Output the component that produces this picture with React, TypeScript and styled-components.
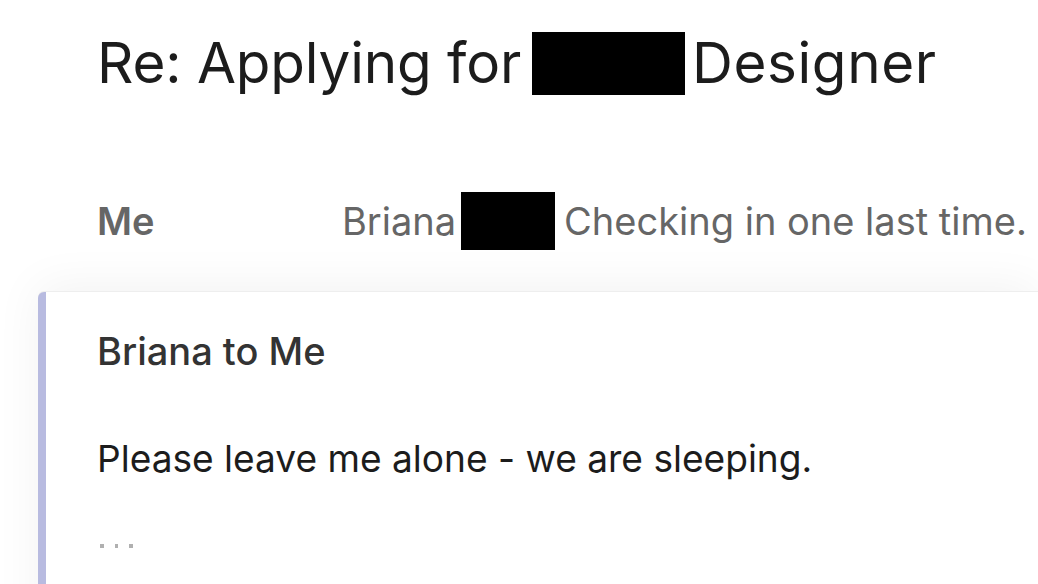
import React from "react";
import styled, { createGlobalStyle } from "styled-components";

const GlobalStyle = createGlobalStyle`
  html, body {
    margin: 0;
    padding: 0;
    background: #ffffff;
  }
  body {
    font-family: Inter, "Liberation Sans", sans-serif;
    overflow: hidden;
  }
`;

const Page = styled.div`
  width: 1038px;
  height: 584px;
  overflow: hidden;
  background: #ffffff;
`;

const Subject = styled.h1`
  margin: 0;
  padding: 25px 0 0 97px;
  height: 150px;
  box-sizing: border-box;
  font-size: 56.6px;
  font-weight: 400;
  line-height: 76px;
  color: #1c1c1c;
  letter-spacing: -0.2px;
  white-space: nowrap;
  display: flex;
  align-items: flex-start;
`;

const Word = styled.span<{ $spacing?: number }>`
  letter-spacing: ${(p) => p.$spacing ?? 0}px;
`;

const Redacted = styled.span<{ $w: number; $h: number; $top?: number }>`
  display: inline-block;
  width: ${(p) => p.$w}px;
  height: ${(p) => p.$h}px;
  margin-top: ${(p) => p.$top ?? 0}px;
  background: #000;
`;

const Gap = styled.span<{ $w: number }>`
  display: inline-block;
  width: ${(p) => p.$w}px;
`;

const ThreadRow = styled.div`
  display: flex;
  align-items: center;
  height: 142px;
  padding-left: 97px;
  font-size: 38px;
  color: #666;
  white-space: nowrap;
`;

const From = styled.div`
  width: 245px;
  font-weight: 600;
  flex-shrink: 0;
`;

const Preview = styled.div`
  display: flex;
  align-items: center;
  font-weight: 400;
`;

const Message = styled.div`
  margin-left: 38px;
  border-left: 8px solid #b8bbe0;
  border-top-left-radius: 6px;
  background: #ffffff;
  box-shadow: 0 -1px 0 #eeeeee, 0 -6px 48px rgba(0, 0, 0, 0.055);
  padding: 36px 0 40px 51px;
  min-height: 400px;
`;

const MessageHead = styled.div`
  font-size: 38px;
  font-weight: 500;
  color: #333;
  margin-bottom: 62px;
`;

const Body = styled.div`
  font-size: 37.1px;
  color: #1c1c1c;
`;

const Ellipsis = styled.div`
  display: flex;
  gap: 11px;
  margin: 63px 0 0 3px;
`;

const Dot = styled.span`
  width: 3.5px;
  height: 3.5px;
  background: #b0b0b0;
`;

export default function App() {
  return (
    <Page>
      <GlobalStyle />
      <Subject>
        Re: Applying for<Gap $w={11} />
        <Redacted $w={153} $h={63} $top={7} />
        <Gap $w={7} />
        <Word $spacing={0.6}>Designer</Word>
      </Subject>
      <ThreadRow>
        <From>Me</From>
        <Preview>
          Briana<Gap $w={5} />
          <Redacted $w={94} $h={58} />
          <Gap $w={9} />
          Checking in one last time.
        </Preview>
      </ThreadRow>
      <Message>
        <MessageHead>Briana to Me</MessageHead>
        <Body>Please leave me alone - we are sleeping.</Body>
        <Ellipsis>
          <Dot />
          <Dot />
          <Dot />
        </Ellipsis>
      </Message>
    </Page>
  );
}
